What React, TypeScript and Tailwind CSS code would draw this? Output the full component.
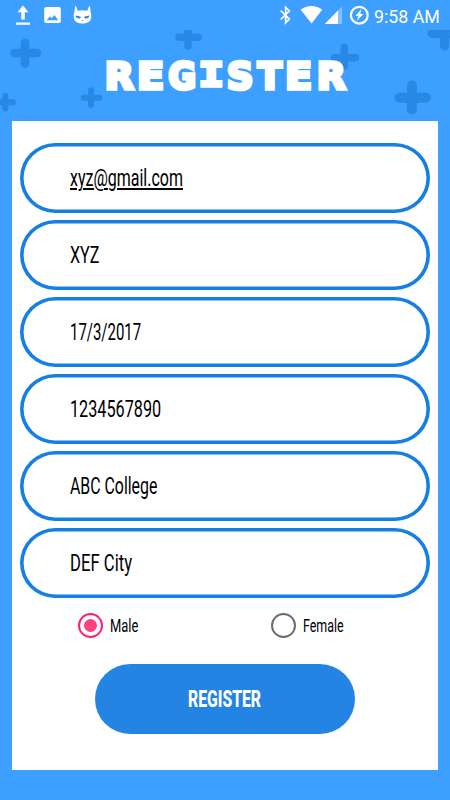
import clsx from 'clsx';

interface Field {
  value: string;
  scale: string;
  underline?: boolean;
}

const fields: Field[] = [
  { value: 'xyz@gmail.com', scale: 'scale-x-[0.695]', underline: true },
  { value: 'XYZ', scale: 'scale-x-[0.7]' },
  { value: '17/3/2017', scale: 'scale-x-[0.65]' },
  { value: '1234567890', scale: 'scale-x-[0.705]' },
  { value: 'ABC College', scale: 'scale-x-[0.69]' },
  { value: 'DEF City', scale: 'scale-x-[0.725]' },
];

// Each letter sits in its own slot so the block lettering keeps an even rhythm
const titleLetters = [
  { char: 'R', slot: 'w-[33px]', glyph: 'scale-x-[1.02]' },
  { char: 'E', slot: 'w-[31px]', glyph: 'scale-x-[1.07]' },
  { char: 'G', slot: 'w-[31px]', glyph: 'scale-x-[0.92]' },
  { char: 'I', slot: 'w-[27px]', glyph: 'font-["Liberation_Mono"] scale-x-[1.1]' },
  { char: 'S', slot: 'w-[31px]', glyph: 'scale-x-[1]' },
  { char: 'T', slot: 'w-[28px]', glyph: 'scale-x-[0.95]' },
  { char: 'E', slot: 'w-[31px]', glyph: 'scale-x-[1.07]' },
  { char: 'R', slot: 'w-[33px]', glyph: 'scale-x-[1.02]' },
];

const StatusBar = () => (
  <div className="relative flex h-[30px] items-center bg-[#3d9fff] text-white">
    <svg className="h-[30px] w-[100px]" viewBox="0 0 100 30" fill="currentColor">
      <path d="M23 5.5l5.5 6.7h-3.7v7.3h-3.6v-7.3h-3.7zM16 22.5h14v2.2H16z" />
      <path
        fillRule="evenodd"
        d="M46.2 7h12.6a2 2 0 0 1 2 2v12a2 2 0 0 1-2 2H46.2a2 2 0 0 1-2-2V9a2 2 0 0 1 2-2zM46.8 20.2H58.3l-3.9-5.2-2.7 3.3-1.8-2.1z"
      />
      <path d="M75.200 6h.8l1.700 4.800c3-.8 6.500-.8 9.500 0L89.200 6h.8l.7 6.200c.8 2 .900 5.500-.2 7.800-1.800 4.600-14.200 4.600-16 0-1.100-2.300-1-5.800-.2-7.800z" />
      <path
        fill="#2484e4"
        d="M75.500 15.500l5.500 1.200c-.3 2.500-4.700 2.600-5.500-1.200zM89.500 15.500l-5.500 1.200c.3 2.500 4.700 2.600 5.500-1.200zM81.600 20h1.800l-.9.900z"
      />
    </svg>
    <svg className="ml-auto h-[30px] w-[96px]" viewBox="278 0 96 30">
      <path
        d="M280.700 10.500l8.600 8.600-3.700 3.800V7.200l3.700 3.700-8.600 8.600"
        fill="none"
        stroke="currentColor"
        strokeWidth="1.700"
      />
      <path d="M300.700 9.700c6-4.900 15.500-4.900 21.500 0L311.500 23.600z" fill="currentColor" />
      <path d="M342 6.500V24h-17.200z" fill="#fff" fillOpacity="0.35" />
      <path d="M338 10.500V24h-13.200z" fill="currentColor" />
      <circle cx="359.300" cy="15.200" r="8.400" fill="none" stroke="currentColor" strokeWidth="2.200" />
      <path d="M361.200 9.300l-5.800 6.600h2.900l-1.400 4.900 6.500-6.900h-3z" fill="currentColor" />
    </svg>
    <span className="w-[76px] pt-[3px] font-[Roboto] text-[17.800px] leading-none whitespace-nowrap">
      9:58 AM
    </span>
  </div>
);

// Rounded plus signs scattered behind the title
const Pattern = () => (
  <svg
    className="absolute inset-0 h-[91px] w-full"
    viewBox="0 30 450 91"
    fill="none"
    stroke="#2789e3"
    strokeLinecap="round"
  >
    <path strokeWidth="8.500" d="M14.500 53h22.500M25 43v20.500" />
    <path strokeWidth="6" d="M-3 102.300h16M5.300 96v12.500" />
    <path strokeWidth="6" d="M83.700 97.800h15.500M91 90.300v14.700" />
    <path strokeWidth="7.500" d="M179 37.300h19M188 26v20" />
    <path strokeWidth="7.500" d="M334.500 57.700h21M344.300 47.500v18.500" />
    <path strokeWidth="10" d="M399.500 97.700h26.500M411.900 85.500v24" />
    <path strokeWidth="9" d="M432 33.500h25M444.600 25v21" />
  </svg>
);

const Radio = ({ label, checked, scale }: { label: string; checked?: boolean; scale: string }) => (
  <div className="flex w-[193px] shrink-0 items-center gap-[7px]">
    <span
      className={clsx(
        'flex size-[25px] shrink-0 items-center justify-center rounded-full border-2',
        checked ? 'border-[#ff1f73]' : 'border-[#6c6c6c]'
      )}
    >
      {checked && <span className="size-[13px] rounded-full bg-[#ff4081]" />}
    </span>
    <span className={clsx('inline-block origin-left pt-0.5 text-[17.500px] leading-6', scale)}>
      {label}
    </span>
  </div>
);

const App = () => {
  return (
    <div className="flex h-[800px] w-[450px] flex-col overflow-hidden bg-[#3d9fff] font-[Roboto,sans-serif] text-black">
      <StatusBar />
      <header className="relative flex h-[91px] justify-center">
        <Pattern />
        <h1 className="relative mt-[25px] flex font-['DejaVu_Sans',sans-serif] text-[37px] leading-[43px] font-bold text-white [-webkit-text-stroke:3.500px_white]">
          {titleLetters.map(({ char, slot, glyph }, index) => (
            <span key={index} className={clsx('flex justify-center', slot)}>
              <span className={glyph}>{char}</span>
            </span>
          ))}
        </h1>
      </header>
      <main className="mx-3 flex h-[648.500px] flex-col bg-white px-2 pt-[21.500px]">
        <div className="flex flex-col gap-[6.500px]">
          {fields.map((field) => (
            <div
              key={field.value}
              className="flex h-[70.500px] items-center rounded-full pt-0.5 pl-[50px] shadow-[inset_0_0_0_3.6px_#167fe4]"
            >
              <span
                className={clsx(
                  'inline-block origin-left text-[23px] leading-7 whitespace-nowrap',
                  field.scale,
                  field.underline && 'underline decoration-[1.5px] underline-offset-2'
                )}
              >
                {field.value}
              </span>
            </div>
          ))}
        </div>
        <div className="mt-[14px] flex pl-[57.500px]">
          <Radio label="Male" checked scale="scale-x-[0.74]" />
          <Radio label="Female" scale="scale-x-[0.71]" />
        </div>
        <button className="mx-auto mt-[25.500px] h-[70px] w-[260px] rounded-full bg-[#2484e4] pt-[3px] text-[23.500px] font-extrabold text-white">
          <span className="inline-block scale-x-[0.67]">REGISTER</span>
        </button>
      </main>
    </div>
  );
};

export default App;
